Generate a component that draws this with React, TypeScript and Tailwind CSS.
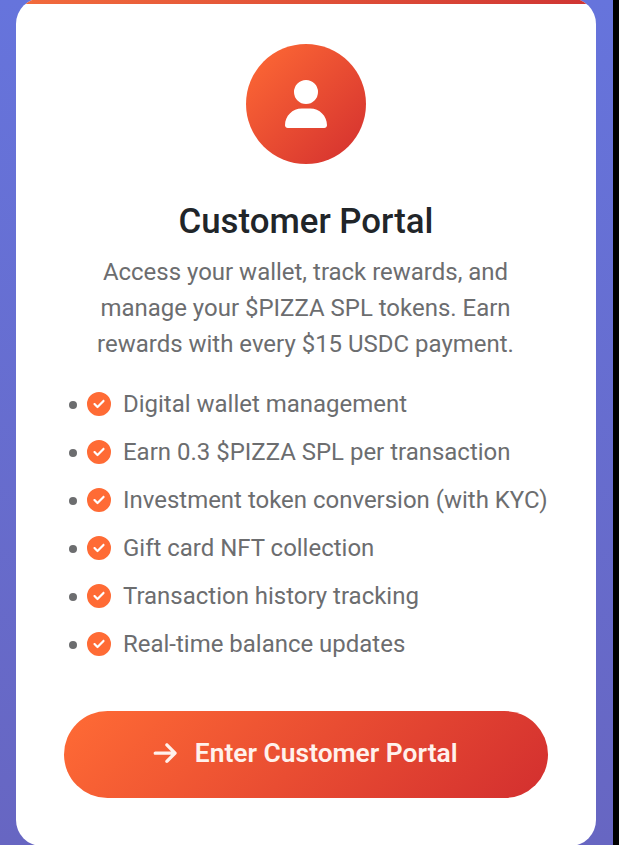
import { FaArrowRight, FaCircleCheck, FaUser } from 'react-icons/fa6';

const features = [
  'Digital wallet management',
  'Earn 0.3 $PIZZA SPL per transaction',
  'Investment token conversion (with KYC)',
  'Gift card NFT collection',
  'Transaction history tracking',
  'Real-time balance updates',
];

const descriptionLines = [
  'Access your wallet, track rewards, and',
  'manage your $PIZZA SPL tokens. Earn',
  'rewards with every $15 USDC payment.',
];

export default function App() {
  return (
    <div className="flex h-[845px] w-[619px] overflow-hidden bg-black font-['Roboto',sans-serif] text-[23.98px] leading-[36px] text-[#6c6d6f]">
      <main className="h-full w-[613px] bg-linear-to-b from-[#6674dc] to-[#6766c2] pl-[16px]">
        <section className="-mt-[2px] flex h-[848px] w-[580px] flex-col overflow-hidden rounded-[26px] bg-white">
          <div className="h-[6px] shrink-0 bg-linear-to-r from-[#f26b3c] to-[#cf3433]" />
          <div className="flex flex-col px-[48px] pt-[40px]">
            <div className="-ml-px flex size-[120px] items-center justify-center self-center rounded-full bg-[linear-gradient(135deg,#ff6b35,#d32f2f)] text-[48px] text-white">
              <FaUser />
            </div>
            <h1 className="mt-[36px] text-center text-[34.8px] leading-[43px] font-medium text-[#212529]">Customer Portal</h1>
            <p className="mt-[11px] -ml-px text-center whitespace-nowrap">
              {descriptionLines.map((line) => (
                <span key={line} className="block">{line}</span>
              ))}
            </p>
            <ul className="mt-[18px] ml-[5px]">
              {features.map((feature) => (
                <li key={feature} className="flex h-[48px] items-center whitespace-nowrap">
                  <span className="mt-[2px] size-[8px] rounded-full bg-[#6c6d6f]" />
                  <FaCircleCheck className="mb-px ml-[10px] size-[24px] shrink-0 text-[#ff6b35]" />
                  <span className="ml-[12px]">{feature}</span>
                </li>
              ))}
            </ul>
            <button className="mt-[43px] flex h-[87px] w-[484px] items-center justify-center rounded-full bg-[linear-gradient(135deg,#ff6b35,#d32f2f)] pr-[2px] pb-[3px] text-[26.4px] font-semibold text-[#fff1ec]">
              <FaArrowRight />
              <span className="ml-[16px]">Enter Customer Portal</span>
            </button>
          </div>
        </section>
      </main>
    </div>
  );
}
